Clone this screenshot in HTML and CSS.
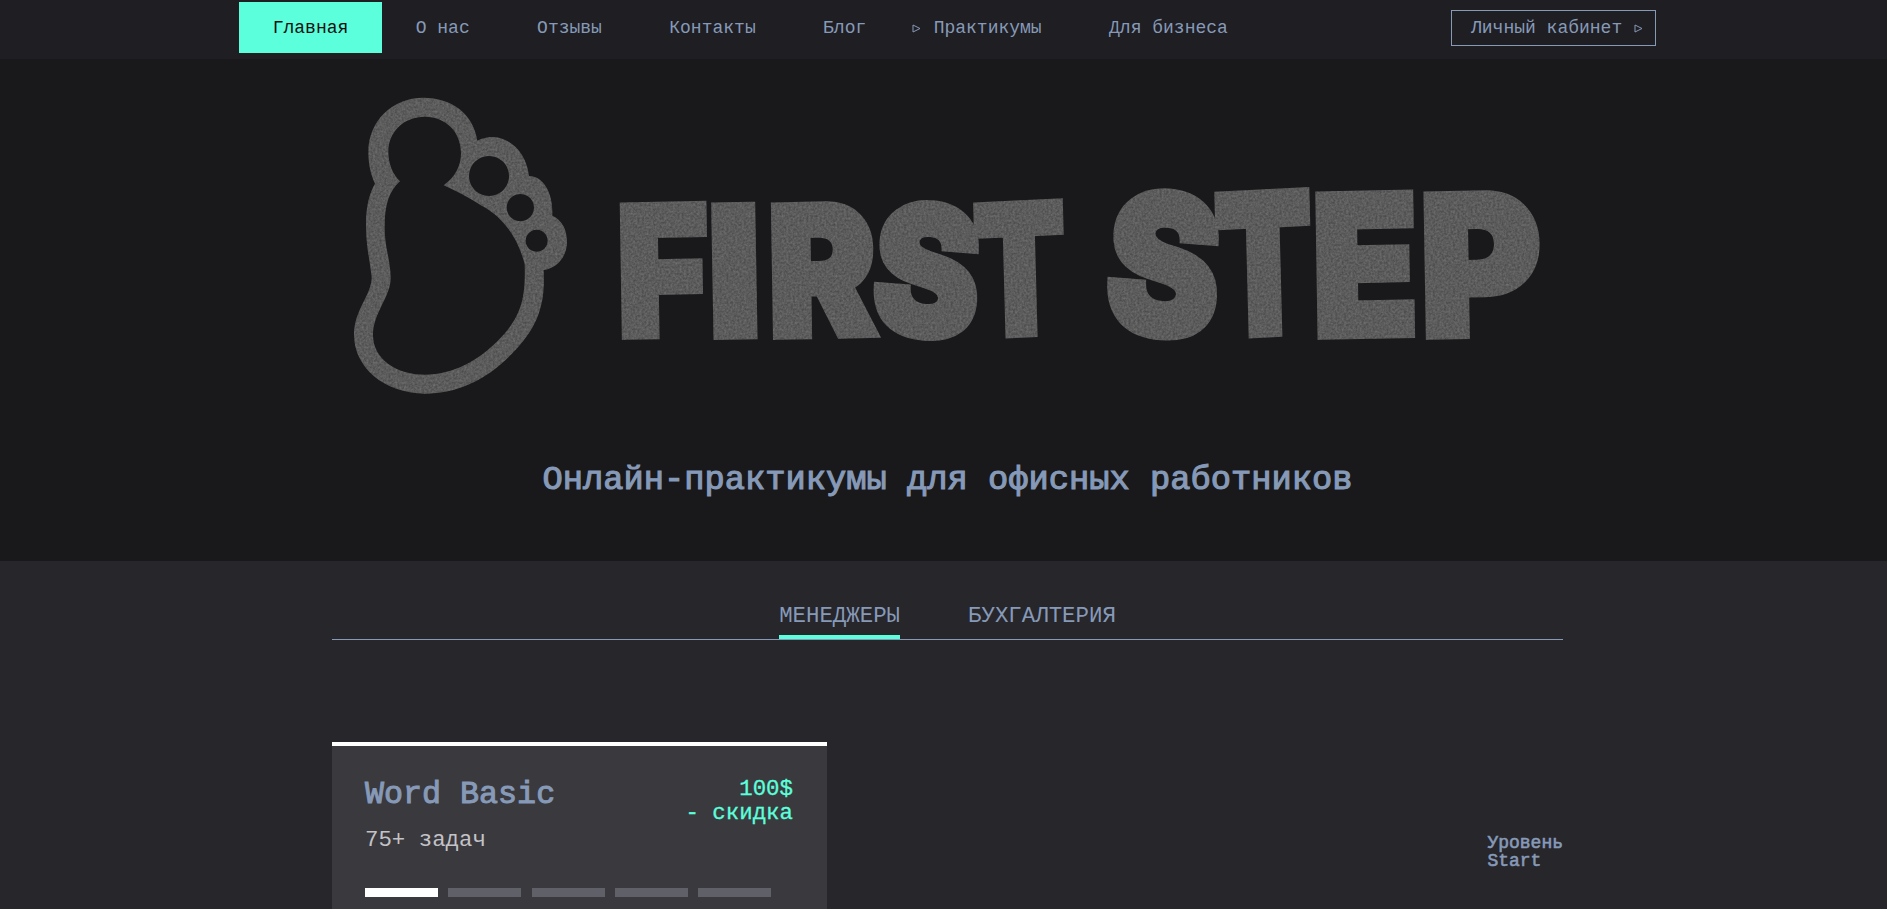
FILE: index.html
```html
<!DOCTYPE html>
<html lang="ru">
<head>
<meta charset="utf-8">
<title>First Step</title>
<link rel="stylesheet" href="styles.css">
</head>
<body>
<header class="topbar">
  <nav class="menu">
    <a class="menu-link active">Главная</a>
    <a class="menu-link">О нас</a>
    <a class="menu-link">Отзывы</a>
    <a class="menu-link">Контакты</a>
    <a class="menu-link">Блог</a>
    <a class="menu-link has-sub"><svg class="arrow" viewBox="0 0 9 9"><path d="M1 1v7l7-3.5z"/></svg>Практикумы</a>
    <a class="menu-link">Для бизнеса</a>
  </nav>
  <a class="account">Личный кабинет<svg class="arrow" viewBox="0 0 9 9"><path d="M1 1v7l7-3.5z"/></svg></a>
</header>
<section class="hero">
  <svg class="logo" viewBox="354 97 1188 298">
    <defs>
      <filter id="grain" x="0" y="0" width="100%" height="100%" color-interpolation-filters="sRGB">
        <feTurbulence type="fractalNoise" baseFrequency="0.45" numOctaves="2" seed="4" result="n"/>
        <feColorMatrix in="n" type="matrix" values="0.2 0 0 0 0.26  0.2 0 0 0 0.26  0.2 0 0 0 0.26  0 0 0 0 1" result="g"/>
        <feComposite in="g" in2="SourceAlpha" operator="in"/>
      </filter>
    </defs>
    <g class="mark" filter="url(#grain)">
      <path transform="translate(340 80) scale(.33333)" fill-rule="evenodd" d="M250 53C335 53 400 100 412 182C480 146 558 200 567 288C608 288 640 335 637 407C666 420 681 448 681 486C681 530 650 566 611 570C617 680 590 745 515 822C440 900 350 941 255 941C130 941 42 860 42 765C42 690 95 645 95 592C88 530 78 500 78 430C78 375 90 336 105 311C91 280 85 250 85 215C85 125 155 53 250 53Z
      M255 110C192 110 145 155 145 215C145 250 158 282 180 304C145 335 134 380 134 440C134 505 152 540 152 595C152 650 99 700 99 765C99 835 165 884 255 884C340 884 415 842 475 781C545 710 557 655 554 552C532 470 488 410 425 377C385 353 350 333 311 316C345 292 363 258 363 220C363 155 317 110 255 110Z
      M447 228a60 60 0 1 0 .1 0Z M541 342a41 41 0 1 0 .1 0Z M590 449a33 33 0 1 0 .1 0Z"/>
    </g>
    <g class="wordmark" filter="url(#grain)">
      <text class="word-first" y="336"><tspan x="618" textLength="91" lengthAdjust="spacingAndGlyphs" rotate="-1">F</tspan><tspan x="709" textLength="53" lengthAdjust="spacingAndGlyphs" rotate="-1">I</tspan><tspan x="769" textLength="108" lengthAdjust="spacingAndGlyphs" rotate="-1">R</tspan><tspan x="870" y="331" textLength="106" lengthAdjust="spacingAndGlyphs" rotate="4">S</tspan><tspan x="976" y="336" textLength="91" lengthAdjust="spacingAndGlyphs" rotate="-2">T</tspan></text>
      <text class="word-step" y="336"><tspan x="1103" y="330" textLength="113" lengthAdjust="spacingAndGlyphs" rotate="4">S</tspan><tspan x="1217" y="336" textLength="97" lengthAdjust="spacingAndGlyphs" rotate="-2">T</tspan><tspan x="1313" textLength="106" lengthAdjust="spacingAndGlyphs" rotate="-1">E</tspan><tspan x="1421" textLength="121" lengthAdjust="spacingAndGlyphs" rotate="-1">P</tspan></text>
    </g>
  </svg>
  <h1 class="slogan">Онлайн-практикумы для офисных работников</h1>
</section>
<main class="content">
  <div class="tabs">
    <a class="tab current">МЕНЕДЖЕРЫ</a>
    <a class="tab">БУХГАЛТЕРИЯ</a>
  </div>
  <div class="row">
    <article class="card">
      <div class="card-head">
        <div>
          <h2 class="card-title">Word Basic</h2>
          <p class="tasks">75+ задач</p>
        </div>
        <p class="price">100$<br>- скидка</p>
      </div>
      <div class="levels">
        <span class="level on"></span><span class="level"></span><span class="level"></span><span class="level"></span><span class="level"></span>
      </div>
    </article>
    <p class="level-label">Уровень<br>Start</p>
  </div>
</main>
</body>
</html>
```
FILE: styles.css
```css
* { box-sizing: border-box; }
body {
  margin: 0;
  background: #27262b;
  color: #869ab8;
  font: 18px/24px "Liberation Mono", monospace;
}
h1, h2, p { margin: 0; }
.topbar {
  display: flex;
  justify-content: space-between;
  align-items: flex-start;
  height: 59px;
  padding: 0 231px 0 239px;
  background: #1f1e22;
}
.menu { display: flex; padding-top: 2px; }
.menu-link { position: relative; height: 51px; padding: 0 33.7px; line-height: 53px; white-space: nowrap; }
.menu-link.active { background: #5cffdc; color: #111; }
.arrow { width: 9px; height: 9px; fill: none; stroke: #869ab8; stroke-width: 1; }
.has-sub .arrow { position: absolute; left: 12px; top: 22px; }
.account {
  display: flex;
  align-items: center;
  gap: 12px;
  width: 205px;
  height: 36px;
  margin-top: 10px;
  padding-left: 19px;
  border: 1px solid #869ab8;
  white-space: nowrap;
}
.hero {
  display: flex;
  flex-direction: column;
  align-items: center;
  height: 502px;
  padding-top: 38px;
  background: #19191b;
}
.logo { width: 1188px; height: 298px; margin-left: 9px; overflow: visible; }
.mark, .wordmark { fill: #5c5c5c; }
.wordmark {
  font-family: Inter, sans-serif;
  font-weight: 900;
  stroke: #5c5c5c;
  stroke-width: 8px;
}
.word-first { font-size: 178px; }
.word-step { font-size: 193px; }
.slogan {
  margin: 65px 0 0 8px;
  font-size: 33.75px;
  line-height: 40px;
  font-weight: 400;
  -webkit-text-stroke: 1.1px #869ab8;
  white-space: nowrap;
}
.content { width: 1231px; margin-left: 332px; }
.tabs {
  display: flex;
  justify-content: center;
  gap: 68px;
  height: 79px;
  padding-top: 40px;
  border-bottom: 1px solid #869ab8;
}
.tab { height: 38px; font-size: 22.4px; line-height: 31px; }
.tab.current { border-bottom: 4px solid #5cffdc; }
.row { display: flex; justify-content: space-between; padding-top: 102px; }
.card { width: 495px; height: 167px; padding: 33px 33px 0; border-top: 4px solid #fff; background: #3a393e; }
.card-head { display: flex; justify-content: space-between; height: 109px; }
.card-title {
  margin-top: -2px;
  font-size: 31.7px;
  line-height: 36px;
  font-weight: 400;
  -webkit-text-stroke: 1px #869ab8;
}
.tasks { margin-top: 14px; color: #c3c3c7; font-size: 22.4px; line-height: 26px; }
.price {
  margin: -2px 1px 0 0;
  color: #5cffdc;
  font-size: 22.4px;
  line-height: 24px;
  text-align: right;
  -webkit-text-stroke: .3px #5cffdc;
}
.levels { display: flex; gap: 10.25px; }
.level { width: 73px; height: 9px; background: #606068; }
.level.on { background: #fff; }
.level-label { margin-top: 92px; line-height: 18px; -webkit-text-stroke: .6px #869ab8; }
```
